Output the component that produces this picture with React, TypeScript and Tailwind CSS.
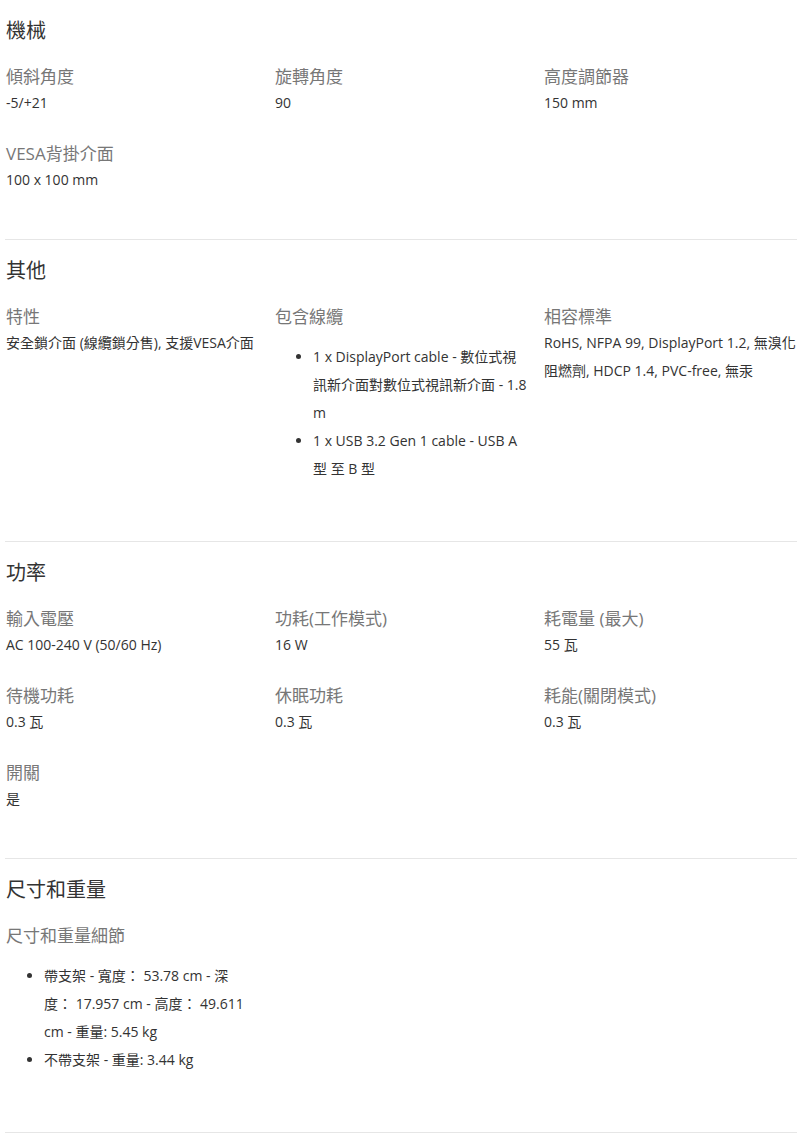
import React from 'react';

type Spec = {
  label: string;
  value?: string;
  list?: string[];
  narrow?: boolean;
};

type Section = {
  title: string;
  specs: Spec[];
};

const sections: Section[] = [
  {
    title: '機械',
    specs: [
      { label: '傾斜角度', value: '-5/+21' },
      { label: '旋轉角度', value: '90' },
      { label: '高度調節器', value: '150 mm' },
      { label: 'VESA背掛介面', value: '100 x 100 mm' },
    ],
  },
  {
    title: '其他',
    specs: [
      { label: '特性', value: '安全鎖介面 (線纜鎖分售), 支援VESA介面' },
      {
        label: '包含線纜',
        list: [
          '1 x DisplayPort cable - 數位式視訊新介面對數位式視訊新介面 - 1.8 m',
          '1 x USB 3.2 Gen 1 cable - USB A 型 至 B 型',
        ],
      },
      { label: '相容標準', value: 'RoHS, NFPA 99, DisplayPort 1.2, 無溴化阻燃劑, HDCP 1.4, PVC-free, 無汞' },
    ],
  },
  {
    title: '功率',
    specs: [
      { label: '輸入電壓', value: 'AC 100-240 V (50/60 Hz)' },
      { label: '功耗(工作模式)', value: '16 W' },
      { label: '耗電量 (最大)', value: '55 瓦' },
      { label: '待機功耗', value: '0.3 瓦' },
      { label: '休眠功耗', value: '0.3 瓦' },
      { label: '耗能(關閉模式)', value: '0.3 瓦' },
      { label: '開關', value: '是' },
    ],
  },
  {
    title: '尺寸和重量',
    specs: [
      {
        label: '尺寸和重量細節',
        narrow: true,
        list: [
          '帶支架 - 寬度： 53.78 cm - 深度： 17.957 cm - 高度： 49.611 cm - 重量: 5.45 kg',
          '不帶支架 - 重量: 3.44 kg',
        ],
      },
    ],
  },
];

const SpecItem: React.FC<{ spec: Spec }> = ({ spec }) => (
  <div>
    <div className="text-[17px] leading-[24px] text-[#777]">{spec.label}</div>
    {spec.value && <div className="text-[14px] leading-[28px] text-[#333]">{spec.value}</div>}
    {spec.list && (
      <ul
        className={`list-disc pl-[38px] mt-[14px] mb-[13px] text-[14px] leading-[28px] text-[#333] ${
          spec.narrow ? 'w-[243px]' : ''
        }`}
      >
        {spec.list.map((item) => (
          <li key={item}>{item}</li>
        ))}
      </ul>
    )}
  </div>
);

export default function App() {
  return (
    <div
      className="bg-white w-[800px] min-h-[1133px] pl-[5px] pr-[3px]"
      style={{ fontFamily: '"Open Sans", "Noto Sans CJK TC", sans-serif' }}
    >
      {sections.map((section, i) => (
        <section
          key={section.title}
          className={`pt-[16px] pb-[45px] pl-[1px] ${i > 0 ? 'border-t border-[#e6e6e6]' : ''}`}
        >
          <h2 className="text-[20px] leading-[30px] text-[#333] mb-[19px]">{section.title}</h2>
          <div className="grid grid-cols-[255px_255px_1fr] gap-x-[14px] gap-y-[25px]">
            {section.specs.map((spec) => (
              <SpecItem key={spec.label} spec={spec} />
            ))}
          </div>
        </section>
      ))}
      <div className="border-t border-[#e6e6e6]" />
    </div>
  );
}
